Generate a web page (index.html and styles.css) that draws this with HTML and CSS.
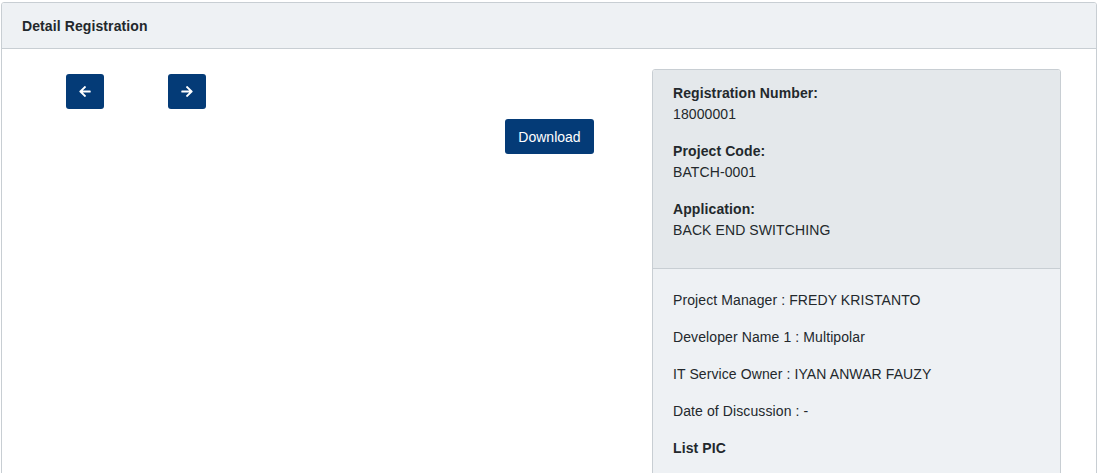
FILE: index.html
```html
<!DOCTYPE html>
<html>
<head>
<meta charset="utf-8">
<link rel="stylesheet" href="styles.css">
</head>
<body>
<div class="card">
  <div class="card-header">Detail Registration</div>
  <div class="card-body">
    <div class="left-col">
      <div class="nav-row">
        <button class="btn btn-icon" aria-label="Previous">
          <svg width="12" height="13" viewBox="0 0 448 512"><path fill="#fff" d="M257.5 445.1l-22.2 22.2c-9.4 9.4-24.6 9.4-33.9 0L7 273c-9.4-9.4-9.4-24.6 0-33.9L201.4 44.7c9.4-9.4 24.6-9.4 33.9 0l22.2 22.2c9.5 9.5 9.3 25-.4 34.3L136.6 216H424c13.3 0 24 10.7 24 24v32c0 13.3-10.7 24-24 24H136.6l120.5 114.8c9.8 9.3 10 24.8.4 34.3z"/></svg>
        </button>
        <button class="btn btn-icon" aria-label="Next">
          <svg width="12" height="13" viewBox="0 0 448 512"><path fill="#fff" d="M190.5 66.9l22.2-22.2c9.4-9.4 24.6-9.4 33.9 0L441 239c9.4 9.4 9.4 24.6 0 33.9L246.6 467.3c-9.4 9.4-24.6 9.4-33.9 0l-22.2-22.2c-9.5-9.5-9.3-25 .4-34.3L311.4 296H24c-13.3 0-24-10.7-24-24v-32c0-13.3 10.7-24 24-24h287.4L190.9 101.2c-9.8-9.3-10-24.8-.4-34.3z"/></svg>
        </button>
      </div>
      <div class="download-row">
        <button class="btn btn-text">Download</button>
      </div>
    </div>
    <div class="info-panel">
      <div class="info-top">
        <div class="field">
          <div class="field-label">Registration Number:</div>
          <div class="field-value">18000001</div>
        </div>
        <div class="field">
          <div class="field-label">Project Code:</div>
          <div class="field-value">BATCH-0001</div>
        </div>
        <div class="field">
          <div class="field-label">Application:</div>
          <div class="field-value">BACK END SWITCHING</div>
        </div>
      </div>
      <div class="info-bottom">
        <p>Project Manager : FREDY KRISTANTO</p>
        <p>Developer Name 1 : Multipolar</p>
        <p>IT Service Owner : IYAN ANWAR FAUZY</p>
        <p>Date of Discussion : -</p>
        <p class="strong">List PIC</p>
      </div>
    </div>
  </div>
</div>
</body>
</html>
```

FILE: styles.css
```css
html, body {
  margin: 0;
  background: #fff;
}
body {
  padding: 2px 0 0 1px;
  font-family: "Liberation Sans", Arial, sans-serif;
  font-size: 14px;
  line-height: 1.5;
  color: #23282c;
  letter-spacing: 0.1px;
  overflow: hidden;
}
.card {
  width: 1096px;
  box-sizing: border-box;
  border: 1px solid #c8ced3;
  border-radius: 3px;
  height: 520px;
}
.card-header {
  height: 46px;
  box-sizing: border-box;
  padding: 1px 20px 0;
  display: flex;
  align-items: center;
  background: #eef1f4;
  border-bottom: 1px solid #c8ced3;
  font-weight: bold;
  font-size: 14px;
  border-radius: 2px 2px 0 0;
}
.card-body {
  display: flex;
  padding: 20px 34px 0 20px;
}
.left-col {
  width: 572px;
  margin-right: 58px;
  flex: none;
}
.nav-row {
  display: flex;
  gap: 64px;
  padding-left: 44px;
  margin-top: 5px;
}
.btn {
  border: none;
  background: #043b77;
  color: #fff;
  border-radius: 3px;
  font-family: inherit;
  letter-spacing: 0;
  cursor: pointer;
  padding: 0;
}
.btn-icon {
  width: 38px;
  height: 35px;
  display: flex;
  align-items: center;
  justify-content: center;
}
.download-row {
  display: flex;
  justify-content: flex-end;
  margin-top: 10px;
}
.btn-text {
  width: 89px;
  height: 35px;
  font-size: 14px;
}
.info-panel {
  width: 409px;
  flex: none;
  box-sizing: border-box;
  border: 1px solid #c8ced3;
  border-radius: 3px;
  overflow: hidden;
}
.info-top {
  background: #e4e8eb;
  padding: 13px 20px 11px;
  border-bottom: 1px solid #c8ced3;
}
.field {
  margin-bottom: 16px;
}
.field-label {
  font-weight: bold;
}
.info-bottom {
  background: #eef1f4;
  padding: 21px 20px 40px;
}
.info-bottom p {
  margin: 0 0 16px;
}
.info-bottom .strong {
  font-weight: bold;
}
```
